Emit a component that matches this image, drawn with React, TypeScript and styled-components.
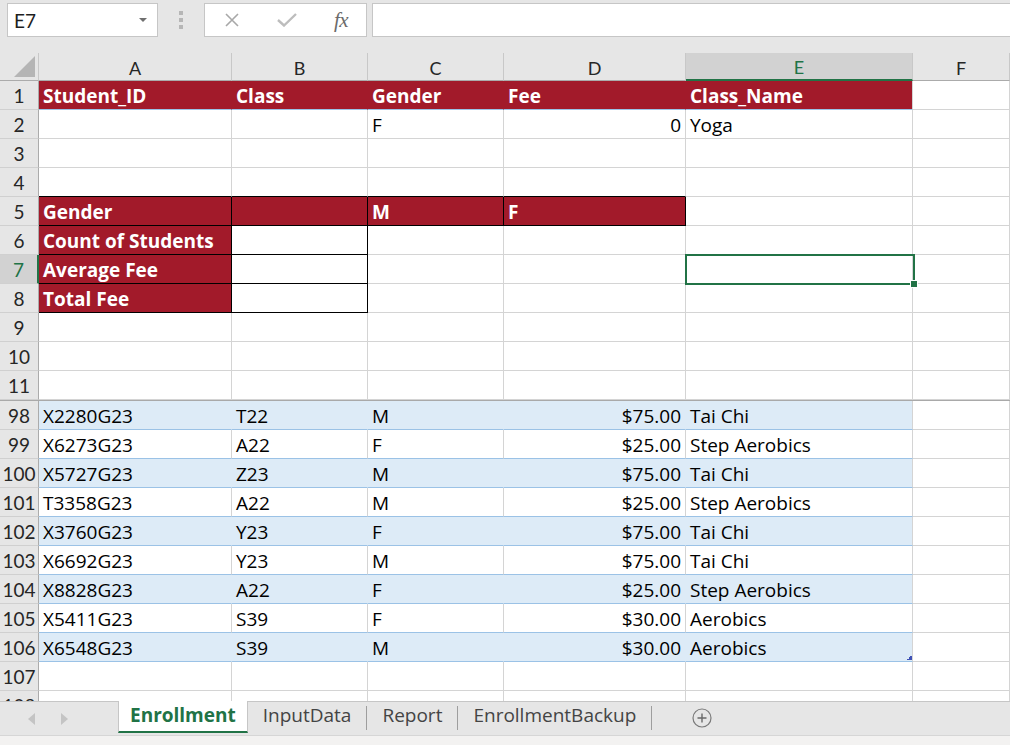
import React from 'react';
import styled, { createGlobalStyle } from 'styled-components';

const RED = '#a21a2a';
const BLUE = '#ddebf7';
const BLUE_LINE = '#9bc2e6';
const GRID = '#d4d4d4';
const GREEN = '#217346';
const BLACK = '#000000';
const COLS = '39px 193px 136px 136px 182px 227px 97px';
const FONT = 'Lato, "Noto Sans", "Liberation Sans", sans-serif';
const CELL_FONT = '"Open Sans", "Noto Sans", "Liberation Sans", sans-serif';

const GlobalStyle = createGlobalStyle`
  html, body { margin: 0; padding: 0; }
  body { font-family: ${FONT}; background: #ffffff; color: #000; }
  * { box-sizing: border-box; }
`;

const Page = styled.div`
  width: 1010px;
  height: 745px;
  display: flex;
  flex-direction: column;
  overflow: hidden;
`;

/* ---------- formula bar ---------- */
const TopBar = styled.div`
  height: 53px;
  flex: none;
  background: #e6e6e6;
  display: flex;
  align-items: flex-start;
  padding: 3px 0 0 7px;
`;

const NameBox = styled.div`
  width: 151px;
  height: 34px;
  background: #ffffff;
  border: 1px solid #c6c6c6;
  display: flex;
  align-items: center;
  justify-content: space-between;
  padding: 0 10px 0 6px;
  font-size: 19px;
  color: #1e1e1e;
`;

const DropArrow = styled.span`
  width: 0;
  height: 0;
  border-left: 4px solid transparent;
  border-right: 4px solid transparent;
  border-top: 4px solid #6f6f6f;
`;

const Grip = styled.div`
  width: 46px;
  height: 34px;
  display: flex;
  flex-direction: column;
  align-items: center;
  justify-content: center;
  gap: 3px;
`;

const GripDot = styled.span`
  width: 4px;
  height: 4px;
  background: #b6b6b6;
`;

const FxButtons = styled.div`
  width: 163px;
  height: 34px;
  background: #ffffff;
  border: 1px solid #c6c6c6;
  display: flex;
  align-items: center;
  padding-left: 17px;
  gap: 35px;
`;

const FxSlot = styled.span`
  width: 20px;
  height: 20px;
  display: flex;
  align-items: center;
  justify-content: center;
`;

const FxText = styled.span`
  font-family: "Liberation Serif", "DejaVu Serif", serif;
  font-style: italic;
  font-size: 21px;
  color: #6b6b6b;
  letter-spacing: -0.5px;
  margin-left: -2px;
`;

const FormulaInput = styled.div`
  flex: 1;
  height: 34px;
  margin-left: 5px;
  background: #ffffff;
  border: 1px solid #c6c6c6;
  border-right: none;
`;

/* ---------- column headers ---------- */
const HeaderRow = styled.div`
  display: grid;
  grid-template-columns: ${COLS};
  height: 28px;
  flex: none;
`;

const Corner = styled.div`
  background: #e6e6e6;
  border-right: 1px solid #c8c8c8;
  border-bottom: 1px solid #ababab;
  display: flex;
  align-items: flex-end;
  justify-content: flex-end;
  padding: 0 3px 3px 0;
`;

const ColHead = styled.div<{ $sel?: boolean }>`
  background: ${(p) => (p.$sel ? '#d2d2d2' : '#e6e6e6')};
  border-right: 1px solid #c8c8c8;
  border-bottom: ${(p) => (p.$sel ? `2px solid ${GREEN}` : '1px solid #ababab')};
  color: ${(p) => (p.$sel ? GREEN : '#262626')};
  font-size: 18px;
  display: flex;
  align-items: center;
  justify-content: center;
  padding-top: 2px;
`;

/* ---------- body ---------- */
const Body = styled.div`
  flex: 1;
  position: relative;
  overflow: hidden;
  display: flex;
  flex-direction: column;
`;

const Row = styled.div`
  display: grid;
  grid-template-columns: ${COLS};
  height: 29px;
  flex: none;
`;

const RowHead = styled.div<{ $sel?: boolean }>`
  background: ${(p) => (p.$sel ? '#d2d2d2' : '#e6e6e6')};
  border-right: ${(p) => (p.$sel ? `2px solid ${GREEN}` : '1px solid #ababab')};
  border-bottom: 1px solid #d0d0d0;
  color: ${(p) => (p.$sel ? GREEN : '#262626')};
  font-size: 19px;
  display: flex;
  align-items: center;
  justify-content: center;
  padding-top: 1px;
`;

const Cell = styled.div<{
  $bg: string;
  $right: string;
  $bottom: string;
  $color: string;
  $bold: boolean;
  $align: 'left' | 'right';
}>`
  background: ${(p) => p.$bg};
  border-right: 1px solid ${(p) => p.$right};
  border-bottom: 1px solid ${(p) => p.$bottom};
  color: ${(p) => p.$color};
  font-family: ${CELL_FONT};
  font-weight: ${(p) => (p.$bold ? 700 : 400)};
  font-size: 19px;
  display: flex;
  align-items: center;
  justify-content: ${(p) => (p.$align === 'right' ? 'flex-end' : 'flex-start')};
  padding: 1px 4px 0 4px;
  white-space: nowrap;
  overflow: visible;
`;

const FrozenLine = styled.div`
  height: 1px;
  flex: none;
  background: #a9a9a9;
`;

const Selection = styled.div`
  position: absolute;
  left: 685px;
  top: 173px;
  width: 230px;
  height: 31px;
  border: 2px solid ${GREEN};
  pointer-events: none;
`;

const FillHandle = styled.div`
  position: absolute;
  right: -5px;
  bottom: -5px;
  width: 8px;
  height: 8px;
  background: ${GREEN};
  border: 1px solid #ffffff;
`;

const TableHandle = styled.div`
  position: absolute;
  left: 907px;
  top: 574px;
  width: 5px;
  height: 5px;
  background: linear-gradient(135deg, transparent 50%, #3f51b5 50%);
`;

/* ---------- sheet tabs ---------- */
const TabBar = styled.div`
  height: 34px;
  flex: none;
  background: #e6e6e6;
  border-top: 1px solid #c6c6c6;
  display: flex;
  align-items: stretch;
`;

const Nav = styled.div`
  width: 118px;
  display: flex;
  align-items: center;
  padding-left: 28px;
  gap: 26px;
`;

const NavArrow = styled.span<{ $dir: 'left' | 'right' }>`
  width: 0;
  height: 0;
  border-top: 6px solid transparent;
  border-bottom: 6px solid transparent;
  ${(p) =>
    p.$dir === 'left'
      ? 'border-right: 7px solid #c4c4c4;'
      : 'border-left: 7px solid #c4c4c4;'}
`;

const Tab = styled.div<{ $active?: boolean }>`
  display: flex;
  align-items: center;
  padding: 0 ${(p) => (p.$active ? '11px' : '15px')} 2px ${(p) => (p.$active ? '11px' : '15px')};
  margin-top: -1px;
  font-family: ${CELL_FONT};
  font-size: 19px;
  color: ${(p) => (p.$active ? GREEN : '#444444')};
  font-weight: ${(p) => (p.$active ? 700 : 400)};
  background: ${(p) => (p.$active ? '#ffffff' : 'transparent')};
  border-left: ${(p) => (p.$active ? '1px solid #c6c6c6' : 'none')};
  border-right: ${(p) => (p.$active ? '1px solid #c6c6c6' : 'none')};
  border-bottom: ${(p) => (p.$active ? `2px solid ${GREEN}` : '2px solid transparent')};
  margin-bottom: 2px;
`;

const TabSep = styled.span`
  width: 1px;
  align-self: center;
  height: 24px;
  background: #9e9e9e;
  margin-top: -2px;
`;

const AddSheet = styled.div`
  display: flex;
  align-items: center;
  padding-left: 40px;
  margin-top: -2px;
`;

const StatusStrip = styled.div`
  height: 10px;
  flex: none;
  background: #f3f2f1;
  border-top: 1px solid #d6d6d6;
`;

/* ---------- data ---------- */
type CellDef = {
  t?: string;
  bg?: string;
  right?: string;
  bottom?: string;
  color?: string;
  bold?: boolean;
  align?: 'left' | 'right';
};

type RowDef = { n: number; cells: CellDef[] };

const empty = (): CellDef[] => [{}, {}, {}, {}, {}, {}];

const redHead = (t: string, right: string): CellDef => ({
  t,
  bg: RED,
  color: '#ffffff',
  bold: true,
  right,
  bottom: BLUE_LINE,
});

const boxRed = (t: string): CellDef => ({
  t,
  bg: RED,
  color: '#ffffff',
  bold: true,
  right: BLACK,
  bottom: BLACK,
});

const boxWhite: CellDef = { right: BLACK, bottom: BLACK };

const topRows: RowDef[] = [
  {
    n: 1,
    cells: [
      redHead('Student_ID', RED),
      redHead('Class', RED),
      redHead('Gender', RED),
      redHead('Fee', RED),
      redHead('Class_Name', GRID),
      {},
    ],
  },
  { n: 2, cells: [{}, {}, { t: 'F' }, { t: '0', align: 'right' }, { t: 'Yoga' }, {}] },
  { n: 3, cells: empty() },
  {
    n: 4,
    cells: [{ bottom: BLACK }, { bottom: BLACK }, { bottom: BLACK }, { bottom: BLACK }, {}, {}],
  },
  {
    n: 5,
    cells: [boxRed('Gender'), boxRed(''), boxRed('M'), boxRed('F'), {}, {}],
  },
  { n: 6, cells: [boxRed('Count of Students'), boxWhite, {}, {}, {}, {}] },
  { n: 7, cells: [boxRed('Average Fee'), boxWhite, {}, {}, {}, {}] },
  { n: 8, cells: [boxRed('Total Fee'), boxWhite, {}, {}, {}, {}] },
  { n: 9, cells: empty() },
  { n: 10, cells: empty() },
  { n: 11, cells: empty() },
];

const records: [string, string, string, string, string][] = [
  ['X2280G23', 'T22', 'M', '$75.00', 'Tai Chi'],
  ['X6273G23', 'A22', 'F', '$25.00', 'Step Aerobics'],
  ['X5727G23', 'Z23', 'M', '$75.00', 'Tai Chi'],
  ['T3358G23', 'A22', 'M', '$25.00', 'Step Aerobics'],
  ['X3760G23', 'Y23', 'F', '$75.00', 'Tai Chi'],
  ['X6692G23', 'Y23', 'M', '$75.00', 'Tai Chi'],
  ['X8828G23', 'A22', 'F', '$25.00', 'Step Aerobics'],
  ['X5411G23', 'S39', 'F', '$30.00', 'Aerobics'],
  ['X6548G23', 'S39', 'M', '$30.00', 'Aerobics'],
];

const dataRows: RowDef[] = records.map((r, i) => {
  const banded = i % 2 === 0;
  const bg = banded ? BLUE : '#ffffff';
  const inner = banded ? BLUE : GRID;
  const cells: CellDef[] = r.map((t, c) => ({
    t,
    bg,
    right: c === 4 ? GRID : inner,
    bottom: BLUE_LINE,
    align: c === 3 ? 'right' : 'left',
  }));
  cells.push({});
  return { n: 98 + i, cells };
});

const tailRows: RowDef[] = [
  { n: 107, cells: empty() },
  { n: 108, cells: empty() },
];

const LETTERS = ['A', 'B', 'C', 'D', 'E', 'F'];

const SheetRow: React.FC<{ row: RowDef }> = ({ row }) => (
  <Row>
    <RowHead $sel={row.n === 7}>{row.n}</RowHead>
    {row.cells.map((c, i) => (
      <Cell
        key={i}
        $bg={c.bg ?? '#ffffff'}
        $right={c.right ?? GRID}
        $bottom={c.bottom ?? GRID}
        $color={c.color ?? '#000000'}
        $bold={!!c.bold}
        $align={c.align ?? 'left'}
      >
        {c.t}
      </Cell>
    ))}
  </Row>
);

export default function App() {
  return (
    <>
      <GlobalStyle />
      <Page>
        <TopBar>
          <NameBox>
            <span>E7</span>
            <DropArrow />
          </NameBox>
          <Grip>
            <GripDot />
            <GripDot />
            <GripDot />
          </Grip>
          <FxButtons>
            <FxSlot>
              <svg width="16" height="16" viewBox="0 0 16 16">
                <path d="M2 2 L14 14 M14 2 L2 14" stroke="#a8a8a8" strokeWidth="1.6" fill="none" />
              </svg>
            </FxSlot>
            <FxSlot>
              <svg width="20" height="14" viewBox="0 0 20 14">
                <path d="M1 7 L7 12.5 L19 1" stroke="#bdbdbd" strokeWidth="2.4" fill="none" />
              </svg>
            </FxSlot>
            <FxSlot>
              <FxText>fx</FxText>
            </FxSlot>
          </FxButtons>
          <FormulaInput />
        </TopBar>

        <HeaderRow>
          <Corner>
            <svg width="21" height="21" viewBox="0 0 21 21">
              <path d="M21 0 L21 21 L0 21 Z" fill="#b5b5b5" />
            </svg>
          </Corner>
          {LETTERS.map((l) => (
            <ColHead key={l} $sel={l === 'E'}>
              {l}
            </ColHead>
          ))}
        </HeaderRow>

        <Body>
          {topRows.map((r) => (
            <SheetRow key={r.n} row={r} />
          ))}
          <FrozenLine />
          {dataRows.map((r) => (
            <SheetRow key={r.n} row={r} />
          ))}
          {tailRows.map((r) => (
            <SheetRow key={r.n} row={r} />
          ))}
          <Selection>
            <FillHandle />
          </Selection>
          <TableHandle />
        </Body>

        <TabBar>
          <Nav>
            <NavArrow $dir="left" />
            <NavArrow $dir="right" />
          </Nav>
          <Tab $active>Enrollment</Tab>
          <Tab>InputData</Tab>
          <TabSep />
          <Tab>Report</Tab>
          <TabSep />
          <Tab>EnrollmentBackup</Tab>
          <TabSep />
          <AddSheet>
            <svg width="20" height="20" viewBox="0 0 20 20">
              <circle cx="10" cy="10" r="9" stroke="#7a7a7a" strokeWidth="1.2" fill="none" />
              <path d="M10 5.5 V14.5 M5.5 10 H14.5" stroke="#6a6a6a" strokeWidth="1.4" />
            </svg>
          </AddSheet>
        </TabBar>
        <StatusStrip />
      </Page>
    </>
  );
}
